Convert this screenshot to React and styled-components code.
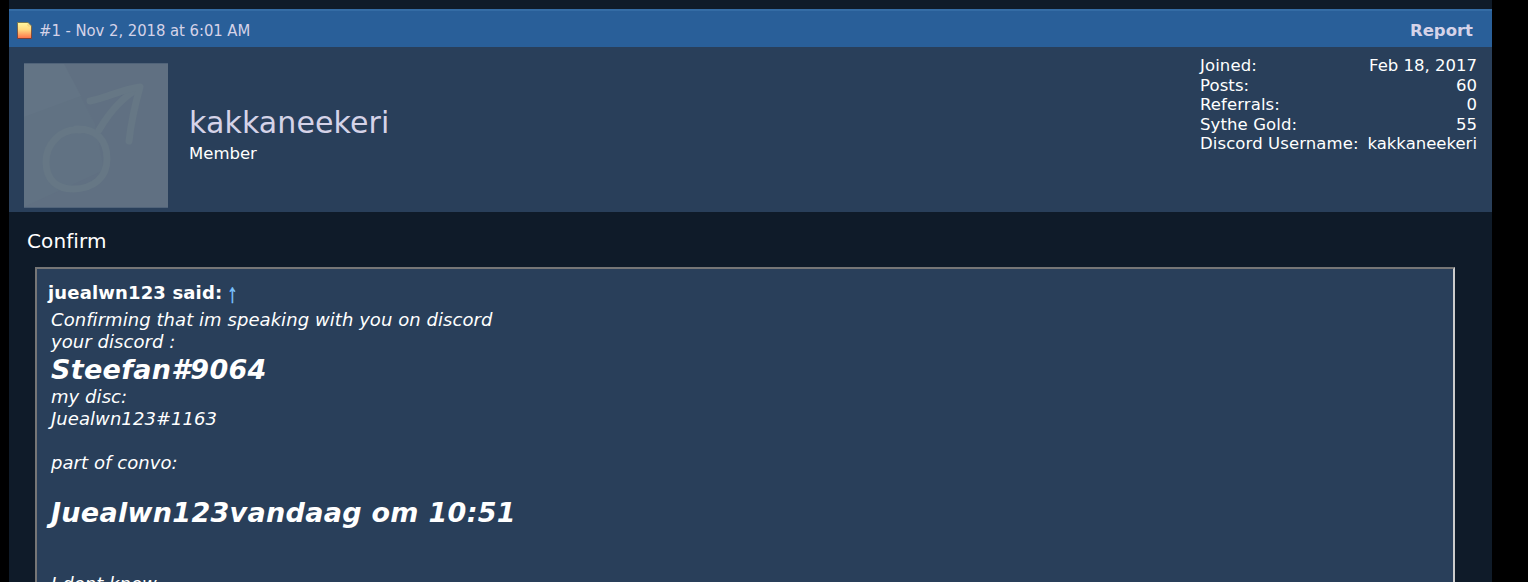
import styled, { createGlobalStyle } from "styled-components";

const details = [
  { label: "Joined:", value: "Feb 18, 2017", height: 20 },
  { label: "Posts:", value: "60", height: 19 },
  { label: "Referrals:", value: "0", height: 20 },
  { label: "Sythe Gold:", value: "55", height: 19 },
  { label: "Discord Username:", value: "kakkaneekeri", height: 20 },
];

const quoteLines = [
  { text: "Confirming that im speaking with you on discord" },
  { text: "your discord :" },
  { text: "Steefan#9064", big: true },
  { text: "my disc:" },
  { text: "Juealwn123#1163" },
  { text: "" },
  { text: "part of convo:" },
  { text: "" },
  { text: "Juealwn123vandaag om 10:51", big: true },
  { text: "" },
  { text: "" },
  { text: "I dont know" },
];

export default function App() {
  return (
    <Page>
      <GlobalStyle />
      <Post>
        <PostHeader>
          <PostIcon />
          <PostDate>#1 - Nov 2, 2018 at 6:01 AM</PostDate>
          <Report>Report</Report>
        </PostHeader>
        <UserPanel>
          <Avatar />
          <UserInfo>
            <Username>kakkaneekeri</Username>
            <UserTitle>Member</UserTitle>
          </UserInfo>
          <Details>
            {details.map(({ label, value, height }) => (
              <DetailRow key={label} $height={height}>
                <span>{label}</span>
                <span>{value}</span>
              </DetailRow>
            ))}
          </Details>
        </UserPanel>
        <Message>Confirm</Message>
        <Quote>
          <Attribution>
            <span>juealwn123 said:</span>
            <Arrow>↑</Arrow>
          </Attribution>
          {quoteLines.map(({ text, big }, index) => (
            <QuoteLine key={index} $big={big}>
              <span>{text}</span>
            </QuoteLine>
          ))}
        </Quote>
      </Post>
    </Page>
  );
}

function PostIcon() {
  return (
    <svg width="15" height="17" viewBox="0 0 15 17">
      <defs>
        <linearGradient id="paper" x1="0" y1="0" x2="0" y2="1">
          <stop offset="0" stopColor="#fff8a0" />
          <stop offset="0.45" stopColor="#ffd980" />
          <stop offset="1" stopColor="#ff7048" />
        </linearGradient>
        <linearGradient id="paperEdge" x1="0" y1="0" x2="0" y2="1">
          <stop offset="0" stopColor="#7a7a52" />
          <stop offset="1" stopColor="#7d3f38" />
        </linearGradient>
      </defs>
      <path
        d="M.5.5h10.5l3.5 3.500v12.500H.5z"
        fill="url(#paper)"
        stroke="url(#paperEdge)"
      />
      <path d="M11 1.500v2.500h2.500" fill="none" stroke="#f3cd78" />
    </svg>
  );
}

function Avatar() {
  return (
    <AvatarBox>
      <svg width="144" height="143" viewBox="0 0 144 143">
        <path d="M0 0h40l31 60 9 46L0 143z" fill="#617283" />
        <path d="M0 0h40l17 32L0 53z" fill="#637485" />
        <g
          fill="none"
          stroke="#667785"
          strokeWidth="7"
          strokeLinecap="round"
          strokeLinejoin="round"
        >
          <path d="M56 66C37 64 22 80 22 98c0 18 11 27 27 27 21 0 34-12 34-30 0-19-11-31-31-30" />
          <path d="M75 66C85 49 97 34 115 24" />
          <path d="M66 37c17-3 32-12 50-14-5 18-9 36-11 54" />
        </g>
      </svg>
    </AvatarBox>
  );
}

const GlobalStyle = createGlobalStyle`
  * {
    box-sizing: border-box;
  }

  body {
    margin: 0;
    background: #000000;
    overflow: hidden;
  }
`;

const Page = styled.div`
  height: 582px;
  padding: 0 36px 0 9px;
  overflow: hidden;
  background: #000000;
  color: #ffffff;
  font-family: "DejaVu Sans", Verdana, sans-serif;
  white-space: nowrap;
`;

const Post = styled.article`
  min-height: 582px;
  padding-top: 9px;
  background: #0f1b29;
`;

const PostHeader = styled.header`
  height: 38px;
  display: flex;
  align-items: center;
  padding: 2px 19px 0 8px;
  border-top: 2px solid #346ca5;
  background: #295f99;
  color: #d5d3e8;

  svg {
    flex: none;
  }
`;

const PostDate = styled.span`
  margin-left: 7px;
  font-family: "DejaVu Sans Condensed", "DejaVu Sans", Tahoma, sans-serif;
  font-stretch: condensed;
  font-size: 16.5px;
  letter-spacing: -0.04px;
`;

const Report = styled.span`
  margin-left: auto;
  font-size: 16.5px;
  font-weight: 700;
`;

const UserPanel = styled.section`
  height: 165px;
  display: flex;
  padding: 16px 15px 0;
  background: #293f5a;
`;

const AvatarBox = styled.div`
  flex: none;
  width: 144px;
  height: 145px;
  border: solid #506379;
  border-width: 1px 0;
  background: #607082;

  svg {
    display: block;
  }
`;

const UserInfo = styled.div`
  margin: 42px 0 0 21px;
`;

const Username = styled.div`
  height: 37px;
  line-height: 36px;
  font-size: 30px;
  letter-spacing: 0.1px;
  color: #d5d3e8;
`;

const UserTitle = styled.div`
  height: 24px;
  line-height: 24px;
  font-size: 16.5px;
`;

const Details = styled.div`
  width: 277px;
  margin: -7px 0 0 auto;
  font-size: 16.5px;
`;

const DetailRow = styled.div`
  height: ${(props) => props.$height}px;
  line-height: 20px;
  display: flex;
  justify-content: space-between;

  span:first-child {
    letter-spacing: 0.1px;
  }
`;

const Message = styled.div`
  height: 55px;
  padding: 17px 18px 0;
  line-height: 24px;
  font-size: 20px;
  letter-spacing: 0.1px;
`;

const Quote = styled.blockquote`
  height: 400px;
  margin: 0 37px 0 26px;
  padding: 13px 14px;
  border: 2px solid;
  border-color: #767676 #cccccc #cccccc #767676;
  background: #293f5a;
  font-size: 18px;
`;

const Attribution = styled.div`
  height: 27px;
  margin-left: -3px;
  display: flex;
  gap: 6px;
  line-height: 22px;
  font-weight: 700;
  letter-spacing: 0.15px;
`;

const Arrow = styled.span`
  color: #7cc4ff;
  font-family: "Liberation Sans", Arial, sans-serif;
  font-weight: 400;
  -webkit-text-stroke: 0.4px #7cc4ff;
  transform: translateY(1px) scale(1.15, 1.45);
`;

const QuoteLine = styled.div`
  height: ${(props) => (props.$big ? 33 : 22)}px;
  line-height: ${(props) => (props.$big ? 33 : 22)}px;
  font-size: ${(props) => (props.$big ? 27 : 18)}px;
  font-weight: ${(props) => (props.$big ? 700 : 400)};
  font-style: italic;
  letter-spacing: ${(props) => (props.$big ? 0.3 : 0.06)}px;
`;
